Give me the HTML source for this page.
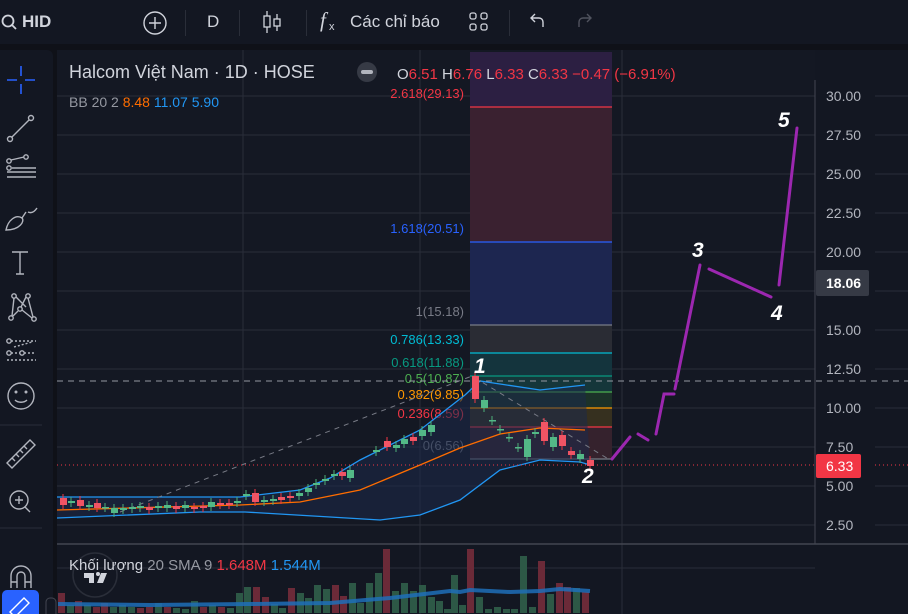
<!DOCTYPE html>
<html><head><meta charset="utf-8">
<style>
*{margin:0;padding:0;box-sizing:border-box}
body{width:908px;height:614px;overflow:hidden;background:#0f1118;font-family:"Liberation Sans","Noto Sans CJK SC",sans-serif;position:relative}
.top{position:absolute;left:0;top:0;width:908px;height:44px;background:#131722;color:#d1d4dc}
.top span{position:absolute;font-size:17px}
.sep{position:absolute;top:10px;width:1px;height:26px;background:#2a2e39}
.left{position:absolute;left:0;top:50px;width:53px;height:564px;background:#131722;border-radius:0 6px 0 0}
#main{position:absolute;left:0;top:0}
</style></head><body>
<div class="top">
<svg style="position:absolute;left:0;top:13px" width="18" height="18"><circle cx="8" cy="8" r="5.5" fill="none" stroke="#d1d4dc" stroke-width="1.8"/><line x1="12" y1="12" x2="16" y2="16" stroke="#d1d4dc" stroke-width="1.8"/></svg>
<span style="left:22px;top:12px;font-weight:bold">HID</span>
<svg style="position:absolute;left:142px;top:10px" width="26" height="26"><circle cx="13" cy="13" r="11" fill="none" stroke="#d1d4dc" stroke-width="1.4"/><path d="M13 7v12M7 13h12" stroke="#d1d4dc" stroke-width="1.4"/></svg>
<div class="sep" style="left:185px"></div>
<span style="left:207px;top:12px">D</span>
<div class="sep" style="left:239px"></div>
<svg style="position:absolute;left:260px;top:9px" width="24" height="26"><path d="M7 2v22M17 5v17" stroke="#d1d4dc" stroke-width="1.3"/><rect x="4" y="7" width="6" height="11" fill="#131722" stroke="#d1d4dc" stroke-width="1.3"/><rect x="14" y="10" width="6" height="7" fill="#131722" stroke="#d1d4dc" stroke-width="1.3"/></svg>
<div class="sep" style="left:306px"></div>
<span style="left:320px;top:8px;font-style:italic;font-family:'Liberation Serif',serif;font-size:21px">f</span><span style="left:329px;top:21px;font-size:11px">x</span>
<span style="left:350px;top:12px">Các chỉ báo</span>
<svg style="position:absolute;left:468px;top:11px" width="22" height="22"><g fill="none" stroke="#d1d4dc" stroke-width="1.3"><rect x="2" y="2" width="6" height="6" rx="2"/><rect x="13" y="2" width="6" height="6" rx="2"/><rect x="2" y="13" width="6" height="6" rx="2"/><rect x="13" y="13" width="6" height="6" rx="2"/></g></svg>
<div class="sep" style="left:509px"></div>
<svg style="position:absolute;left:526px;top:11px" width="22" height="20"><path d="M17 16V11a4 4 0 0 0-4-4H5M9 3 5 7l4 4" fill="none" stroke="#d1d4dc" stroke-width="1.4"/></svg>
<svg style="position:absolute;left:574px;top:11px" width="22" height="20"><path d="M5 16V11a4 4 0 0 1 4-4h8M13 3l4 4-4 4" fill="none" stroke="#50535e" stroke-width="1.4"/></svg>
</div>
<div class="left"></div>
<svg id="main" width="908" height="614" xmlns="http://www.w3.org/2000/svg"></svg>
<script>
const S=document.getElementById('main');let h='';
const Y=p=>96+(30-p)*15.6;
h+='<rect x="57" y="50" width="851" height="564" fill="#131722"/>';
h+='<rect x="57" y="50" width="758" height="494" fill="#141823"/>';
for(let i=0;i<12;i++){let y=96+i*39;h+=`<line x1="57" y1="${y}" x2="815" y2="${y}" stroke="#2a2e39"/><line x1="875" y1="${y}" x2="908" y2="${y}" stroke="#2a2e39"/>`}
[243,420,622].forEach(x=>h+=`<line x1="${x}" y1="50" x2="${x}" y2="614" stroke="#2a2e39"/>`);
h+='<line x1="57" y1="568" x2="815" y2="568" stroke="#2a2e39"/>';
h+='<line x1="57" y1="544" x2="908" y2="544" stroke="#434651" stroke-width="1.5"/>';
h+='<line x1="815" y1="80" x2="815" y2="544" stroke="#434651"/>';
const fx=470,fw=142;
const fib=[[52,107,'#2c1f42'],[107,242,'#3a2130'],[242,325,'#1d2650'],[325,353,'#2a2c34'],[353,376,'#14343d'],[376,392,'#15363a'],[392,408,'#1c3229'],[408,427,'#36301f'],[427,459,'#35222d']];
fib.forEach(f=>h+=`<rect x="${fx}" y="${f[0]}" width="${fw}" height="${f[1]-f[0]}" fill="${f[2]}"/>`);
const fl=[[107,'#f23645','2.618(29.13)'],[242,'#2962ff','1.618(20.51)'],[325,'#787b86','1(15.18)'],[353,'#00bcd4','0.786(13.33)'],[376,'#089981','0.618(11.88)'],[392,'#4caf50','0.5(10.87)'],[408,'#ff9800','0.382(9.85)'],[427,'#f23645','0.236(8.59)'],[459,'#787b86','0(6.56)']];
fl.forEach(f=>{h+=`<line x1="${fx}" y1="${f[0]}" x2="${fx+fw}" y2="${f[0]}" stroke="${f[1]}" stroke-width="1.3"/><text x="464" y="${f[0]-9}" fill="${f[1]}" font-size="13" text-anchor="end">${f[2]}</text>`});
const up=[[57,497],[240,497],[300,490],[330,478],[360,460],[420,430],[465,395],[480,381],[500,384],[540,390],[585,385]];
const lo=[[57,518],[200,512],[245,512],[330,517],[380,520],[420,515],[460,500],[500,470],[540,460],[580,462],[590,465]];
const mid=[[57,510],[240,505],[300,502],[360,490],[420,465],[460,448],[500,434],[540,428],[585,430]];
const pl=a=>a.map(p=>p.join(',')).join(' ');
h+=`<polygon points="${pl(up)} ${pl(lo.slice().reverse())}" fill="#1b2a4a" opacity="0.55"/>`;
h+=`<polyline points="${pl(up)}" fill="none" stroke="#2196f3" stroke-width="1.3"/>`;
h+=`<polyline points="${pl(lo)}" fill="none" stroke="#2196f3" stroke-width="1.3"/>`;
h+=`<polyline points="${pl(mid)}" fill="none" stroke="#ff6d00" stroke-width="1.3"/>`;
h+='<polyline points="120,512 472,376 610,460" fill="none" stroke="#787b86" stroke-dasharray="5,5"/>';
h+='<line x1="57" y1="381" x2="908" y2="381" stroke="#9598a1" stroke-dasharray="6,5"/>';
h+='<line x1="57" y1="465" x2="815" y2="465" stroke="#f23645" stroke-dasharray="1,3"/><line x1="875" y1="465" x2="908" y2="465" stroke="#f23645" stroke-dasharray="1,3"/>';
const cd=[[60,498,505],[68,503,501],[77,500,506],[86,507,505],[94,503,508],[102,508,507],[111,513,508],[120,510,508],[129,509,507],[137,508,506],[146,507,510],[155,508,506],[164,508,505],[173,506,509],[182,508,505],[191,507,509],[200,506,508],[208,507,502],[217,503,505],[226,503,505],[234,503,501],[243,496,494],[252,493,502],[261,502,500],[270,501,499],[278,497,500],[287,496,498],[296,496,493],[305,492,488],[313,485,483],[322,481,479],[331,476,474],[339,472,476],[347,478,470],[373,452,450],[384,441,447],[393,448,445],[401,444,439],[410,437,441],[419,436,430],[428,432,425],[472,376,399],[481,408,400],[489,421,420],[497,430,429],[506,438,437],[515,448,447],[524,457,439],[532,434,432],[541,422,441],[550,447,437],[559,435,446],[568,451,455],[577,459,454],[587,460,466]];
cd.forEach(c=>{const r=c[2]>c[1];const t=Math.min(c[1],c[2]),b=Math.max(c[1],c[2]);const col=r?'#f23645':'#4caf78';
h+=`<line x1="${c[0]+3}" y1="${t-4}" x2="${c[0]+3}" y2="${b+4}" stroke="${col}"/><rect x="${c[0]}" y="${t}" width="7" height="${Math.max(b-t,1.5)}" fill="${r?'#f05464':'#53b987'}"/>`});
// volume: [x,h,color]
const vol=[[58,20,'r'],[67,8,'g'],[75,12,'r'],[84,8,'g'],[93,6,'r'],[101,10,'r'],[110,6,'g'],[119,8,'g'],[128,6,'g'],[137,5,'r'],[146,6,'r'],[155,10,'g'],[164,6,'r'],[173,5,'g'],[182,4,'g'],[191,12,'g'],[200,6,'r'],[209,8,'g'],[218,6,'r'],[227,5,'g'],[236,20,'g'],[244,26,'g'],[253,26,'r'],[262,16,'r'],[271,9,'g'],[279,5,'g'],[288,25,'r'],[297,20,'g'],[305,15,'g'],[314,28,'g'],[323,24,'g'],[332,28,'r'],[340,17,'r'],[349,30,'g'],[357,10,'g'],[366,30,'g'],[375,40,'g'],[383,64,'r'],[392,22,'g'],[401,30,'g'],[410,22,'g'],[419,28,'g'],[428,16,'g'],[436,12,'g'],[444,4,'g'],[451,38,'g'],[459,8,'g'],[467,64,'r'],[476,16,'g'],[485,4,'g'],[494,6,'g'],[503,4,'g'],[511,4,'g'],[520,57,'g'],[529,6,'g'],[538,52,'r'],[547,19,'g'],[556,30,'r'],[564,26,'r'],[573,25,'g'],[582,21,'r']];
vol.forEach(v=>h+=`<rect x="${v[0]}" y="${613-v[1]}" width="7" height="${v[1]}" fill="${v[2]=='r'?'#6b2a38':'#2d5846'}"/>`);
h+='<polyline points="58,604 150,605 250,604 330,603 390,598 450,591 460,592 470,590 510,592 540,591 560,589 590,591" fill="none" stroke="#1e6fb8" stroke-width="4" opacity="0.85"/>';
h+='<circle cx="95" cy="575" r="22" fill="none" stroke="#2a2e39" stroke-width="1.5"/><path d="M84 573h10v10h-5v-5h-5zM97 583l4-10h6l-4 10z" fill="#d1d4dc"/><circle cx="98" cy="574" r="2" fill="#d1d4dc"/>';
h+='<text x="69" y="570" font-size="15" fill="#d1d4dc">Khối lượng <tspan fill="#9598a1">20 SMA 9</tspan> <tspan fill="#f23645">1.648M</tspan> <tspan fill="#2196f3">1.544M</tspan></text>';
h+='<g stroke="#9c27b0" stroke-width="3" fill="none" stroke-linecap="round"><path d="M612 459 L630 437"/><path d="M638 434 L648 440"/><path d="M656 434 L664 394 L674 394"/><path d="M675 389 L700 265"/><path d="M709 269 L771 297"/><path d="M779 285 L797 128"/></g>';
[[474,373,'1'],[582,483,'2'],[692,257,'3'],[771,320,'4'],[778,127,'5']].forEach(l=>h+=`<text x="${l[0]}" y="${l[1]}" fill="#fff" font-size="21" font-weight="bold" font-style="italic">${l[2]}</text>`);
[30,27.5,25,22.5,20,15,12.5,10,7.5,5,2.5].forEach(p=>h+=`<text x="826" y="${Y(p)+5}" fill="#b2b5be" font-size="14">${p.toFixed(2)}</text>`);
h+='<rect x="816" y="270" width="53" height="26" rx="2" fill="#363a45"/><text x="826" y="288" fill="#fff" font-size="14" font-weight="bold">18.06</text>';
h+='<rect x="816" y="454" width="45" height="24" rx="2" fill="#f23645"/><text x="826" y="471" fill="#fff" font-size="14">6.33</text>';
h+='<text x="69" y="78" fill="#d1d4dc" font-size="18">Halcom Việt Nam · 1D · HOSE</text>';
h+='<circle cx="367" cy="72" r="10" fill="#363a45"/><rect x="361" y="70" width="12" height="4" rx="2" fill="#b2b5be"/>';
h+='<text x="397" y="79" font-size="15" fill="#d1d4dc">O<tspan fill="#f23645">6.51</tspan> H<tspan fill="#f23645">6.76</tspan> L<tspan fill="#f23645">6.33</tspan> C<tspan fill="#f23645">6.33</tspan> <tspan fill="#f23645">−0.47 (−6.91%)</tspan></text>';
h+='<text x="69" y="107" font-size="14" fill="#9598a1">BB 20 2 <tspan fill="#ff6d00">8.48</tspan> <tspan fill="#2196f3">11.07</tspan> <tspan fill="#2196f3">5.90</tspan></text>';
const ic='fill="none" stroke="#b2b5be" stroke-width="1.4"';
h+='<path d="M21 66v10M21 84v10M7 80h10M25 80h10" stroke="#2962ff" stroke-width="1.6"/>';
h+=`<g ${ic}><circle cx="10" cy="139" r="2.5"/><circle cx="31" cy="118" r="2.5"/><path d="M12 137 29 120"/>
<circle cx="9" cy="161" r="2.2"/><circle cx="9" cy="168" r="2.2"/><circle cx="26" cy="157" r="2.2"/><path d="M11 160l13-3M7 172h29M7 177h29M12 168h24"/>
<path d="M6 230c2-10 10-16 16-12 3 3-2 12-16 12zM22 218l4-6M28 212c4 2 7-1 9-4"/>
<path d="M12 252h16M20 252v22M16 274h8"/>
<circle cx="11" cy="318" r="2.2"/><circle cx="14" cy="296" r="2.2"/><circle cx="28" cy="296" r="2.2"/><circle cx="20" cy="309" r="2.2"/><circle cx="34" cy="319" r="2.2"/><path d="M12 316l2-18M16 297l10 10M26 297l-5 10M18 311l-5 5M22 310l10 8M28 298l5 19"/>
<circle cx="9" cy="341" r="2.2"/><circle cx="9" cy="353" r="2.2"/><circle cx="22" cy="353" r="2.2"/><path d="M11 341h25M11 353h9M24 353h12M7 360h29M14 347l18-5" stroke-dasharray="2,2"/>
<circle cx="21" cy="396" r="13"/><circle cx="16" cy="392" r="0.8"/><circle cx="26" cy="392" r="0.8"/><path d="M15 400c3 3 9 3 12 0"/>
<path d="M7 463 30 440 35 445 12 468zM12 458l3 3M16 454l3 3M20 450l3 3M24 446l3 3"/>
<circle cx="19" cy="500" r="9"/><path d="M25 507l5 5M15 500h8M19 496v8"/>
<path d="M11 588v-12a10 10 0 0 1 20 0v12M11 582h6M25 582h6M17 588v-12a4 4 0 0 1 8 0v12"/></g>`;
h+='<line x1="0" y1="385" x2="42" y2="385" stroke="#2a2e39" opacity="0"/><line x1="0" y1="528" x2="42" y2="528" stroke="#2a2e39"/>';
h+='<line x1="0" y1="425" x2="42" y2="425" stroke="#2a2e39"/>';
h+='<rect x="2" y="590" width="37" height="30" rx="5" fill="#2962ff"/><path d="M10 612l14-14 5 5-14 14z" fill="none" stroke="#fff" stroke-width="1.4"/>';
h+='<rect x="46" y="598" width="10" height="20" rx="4" fill="#131722" stroke="#434651"/>';
S.innerHTML=h;
</script>
</body></html>
